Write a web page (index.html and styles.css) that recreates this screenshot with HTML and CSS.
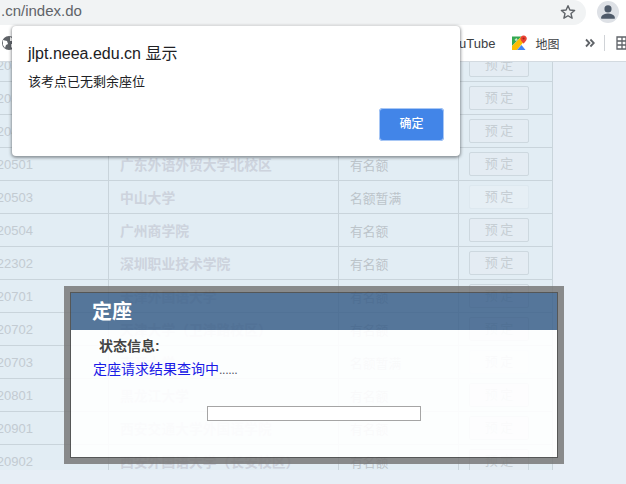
FILE: index.html
```html
<!DOCTYPE html>
<html lang="zh-CN">
<head>
<meta charset="utf-8">
<title>定座</title>
<link rel="stylesheet" href="styles.css">
</head>
<body>
<div class="addr-row">
  <div class="omnibox">
    <span class="url">.cn/index.do</span>
    <svg class="star" viewBox="0 0 24 24" width="18" height="18"><path d="M12 3.6l2.5 5.8 6.3.55-4.8 4.15 1.45 6.15L12 17l-5.45 3.25L8 14.1 3.2 9.95l6.3-.55z" fill="none" stroke="#5f6368" stroke-width="1.9" stroke-linejoin="round"/></svg>
  </div>
  <div class="avatar"><svg viewBox="0 0 24 24" width="22" height="22"><circle cx="12" cy="8.6" r="3.9" fill="#4f5a69"/><path d="M4.6 19.4v-1.6c0-2.8 4.9-4.2 7.4-4.2s7.4 1.4 7.4 4.2v1.6z" fill="#4f5a69"/></svg></div>
</div>
<div class="bookmarks">
  <svg class="globe" viewBox="0 0 16 16" width="16" height="16"><circle cx="8" cy="8" r="7" fill="#5f6368"/><path d="M2 5l4 1 1 3-2 1-1 3-2-3zM9 2l4 2-2 2-2 0zM10 9l3 0-2 4-1-1z" fill="#fff"/></svg>
  <span class="bm-spacer"></span>
  <span class="bm-text">uTube</span>
  <svg class="maps" viewBox="0 0 16 16" width="16" height="16">
    <path d="M1 1.5h9.5L1 11z" fill="#34a853"/>
    <path d="M1 11l9.5-9.5 4 3L6 15H1z" fill="#fbbc04"/>
    <path d="M6 15l4.5-5 4 5z" fill="#4285f4"/>
    <path d="M3.6 4.8l1.7-1.7 1.4 1.4-1.7 1.7z" fill="#c8e6c9"/>
    <path d="M12.6 0.4c-2 0-3.2 1.5-3.2 3.1 0 2.2 3.2 5 3.2 5s3.2-2.8 3.2-5c0-1.6-1.2-3.1-3.2-3.1z" fill="#ea4335"/>
    <circle cx="12.6" cy="3.5" r="1.1" fill="#a52714"/>
  </svg>
  <span class="bm-text bm-map">地图</span>
  <svg class="chev" viewBox="0 0 10 10" width="10" height="10"><path d="M1 1.5L4.4 5 1 8.5M5.4 1.5L8.8 5 5.4 8.5" fill="none" stroke="#5f6368" stroke-width="1.8"/></svg>
  <span class="bm-sep"></span>
  <svg class="apps" viewBox="0 0 14 14" width="14" height="14"><path d="M1 1h13v12H1zM1 5h13M1 9h13M6 1v12M10 1v12" fill="none" stroke="#5f6368" stroke-width="1.3"/></svg>
</div>
<main class="page">
  <table class="sites">
    <colgroup><col class="c1"><col class="c2"><col class="c3"><col class="c4"></colgroup>
    <tbody>
      <tr><td class="code">20301</td><td class="name"></td><td class="st"></td><td class="act"><span class="btn">预 定</span></td></tr>
      <tr><td class="code">20302</td><td class="name"></td><td class="st"></td><td class="act"><span class="btn">预 定</span></td></tr>
      <tr><td class="code">20401</td><td class="name"></td><td class="st"></td><td class="act"><span class="btn">预 定</span></td></tr>
      <tr><td class="code">20501</td><td class="name">广东外语外贸大学北校区</td><td class="st">有名额</td><td class="act"><span class="btn">预 定</span></td></tr>
      <tr><td class="code">20503</td><td class="name">中山大学</td><td class="st">名额暂满</td><td class="act"><span class="btn off">预 定</span></td></tr>
      <tr><td class="code">20504</td><td class="name">广州商学院</td><td class="st">有名额</td><td class="act"><span class="btn">预 定</span></td></tr>
      <tr><td class="code">22302</td><td class="name">深圳职业技术学院</td><td class="st">有名额</td><td class="act"><span class="btn">预 定</span></td></tr>
      <tr><td class="code">20701</td><td class="name">天津外国语大学</td><td class="st">有名额</td><td class="act"><span class="btn">预 定</span></td></tr>
      <tr><td class="code">20702</td><td class="name">天津大学（卫津路校区）</td><td class="st">有名额</td><td class="act"><span class="btn">预 定</span></td></tr>
      <tr><td class="code">20703</td><td class="name">南开大学</td><td class="st">名额暂满</td><td class="act"><span class="btn off">预 定</span></td></tr>
      <tr><td class="code">20801</td><td class="name">黑龙江大学</td><td class="st">有名额</td><td class="act"><span class="btn">预 定</span></td></tr>
      <tr><td class="code">20901</td><td class="name">西安交通大学外国语学院</td><td class="st">有名额</td><td class="act"><span class="btn">预 定</span></td></tr>
      <tr><td class="code">20902</td><td class="name">西安外国语大学（长安校区）</td><td class="st">有名额</td><td class="act"><span class="btn">预 定</span></td></tr>
    </tbody>
  </table>
</main>
<section class="alert">
  <h2 class="alert-title">jlpt.neea.edu.cn 显示</h2>
  <p class="alert-msg">该考点已无剩余座位</p>
  <div class="alert-foot"><span class="alert-ok">确定</span></div>
</section>
<section class="modal">
  <div class="modal-inner">
    <h3 class="modal-head">定座</h3>
    <div class="modal-body">
      <div class="status">状态信息:</div>
      <div class="query">定座请求结果查询中<span class="dots">......</span></div>
      <div class="progress"></div>
    </div>
  </div>
</section>
</body>
</html>
```
FILE: styles.css
```css
* { box-sizing: border-box; }
html, body { margin: 0; height: 100%; }
body {
  width: 626px;
  height: 484px;
  overflow: hidden;
  position: relative;
  background: #e7eef6;
  font-family: "Liberation Sans", "Noto Sans CJK SC", sans-serif;
}
.addr-row {
  position: relative;
  z-index: 1;
  height: 25px;
  display: flex;
  align-items: flex-start;
  background: #fff;
}
.omnibox {
  width: 586px;
  height: 25px;
  padding: 0 9px 0 1px;
  display: flex;
  align-items: center;
  justify-content: space-between;
  background: #f1f3f4;
  border-radius: 0 13px 13px 0;
}
.url {
  font-size: 15px;
  line-height: 22px;
  margin-top: -3px;
  color: #5f6368;
}
.star { display: block; margin-top: -2px; }
.avatar {
  width: 22px;
  height: 22px;
  margin: 1px 0 0 11px;
  border-radius: 50%;
  background: #dee1e6;
}
.avatar svg { display: block; }
.bookmarks {
  position: relative;
  z-index: 1;
  height: 37px;
  display: flex;
  align-items: center;
  background: #fff;
  border-bottom: 1px solid #d3dae0;
}
.globe { flex: none; margin-left: 1px; }
.bm-spacer { flex: 0 0 442px; }
.bm-text {
  font-size: 13px;
  white-space: nowrap;
  color: #3c4043;
}
.maps { flex: none; margin-left: 16px; }
.bm-map { margin-left: 8px; font-size: 12px; }
.chev { flex: none; margin-left: 26px; }
.bm-sep {
  flex: none;
  width: 1px;
  height: 16px;
  margin-left: 9px;
  background: #d0d3d7;
}
.apps { flex: none; margin-left: 11px; }
.page {
  height: 422px;
  overflow: hidden;
  margin-top: -14px;
}
.sites {
  width: 600px;
  margin-left: -49px;
  border-collapse: collapse;
  table-layout: fixed;
  background: #e2edf4;
  font-size: 13px;
  color: #c3cbd2;
}
.c1 { width: 157px; }
.c2 { width: 230px; }
.c3 { width: 120px; }
.c4 { width: 94px; }
.sites td {
  height: 33px;
  padding: 0;
  border: 1px solid #c9d4db;
  vertical-align: middle;
}
.sites .code { text-align: right; padding-right: 75px; }
.sites .name { padding-left: 11px; font-weight: 700; font-size: 13.8px; color: #cdd3dd; }
.sites .st { padding-left: 11px; font-size: 12.8px; color: #bcc4ca; }
.sites .act { padding-left: 10px; }
.btn {
  display: block;
  width: 60px;
  height: 24px;
  line-height: 22px;
  border: 1px solid #cdd8df;
  border-radius: 2px;
  text-align: center;
  font-size: 13px;
  word-spacing: -1px;
  color: #c6ced4;
  background: #e4ecf3;
}
.btn.off { border-color: #dde8ef; background: #e6eff5; }
.alert {
  position: absolute;
  z-index: 2;
  left: 12px;
  top: 26px;
  width: 448px;
  height: 130px;
  padding: 17px 16px 0;
  background: #fff;
  border-radius: 4px;
  box-shadow: 0 1px 3px 1px rgba(60, 64, 67, .5);
}
.alert-title {
  margin: 0;
  font-size: 16px;
  font-weight: 400;
  line-height: 21px;
  color: #202124;
}
.alert-msg {
  margin: 9px 0 0;
  font-size: 13px;
  line-height: 18px;
  color: #202124;
}
.alert-foot {
  display: flex;
  justify-content: flex-end;
  margin-top: 17px;
}
.alert-ok {
  width: 65px;
  height: 33px;
  line-height: 33px;
  text-align: center;
  font-size: 12px;
  font-weight: 500;
  color: #fff;
  background: #4285e8;
  border-radius: 4px;
  box-shadow: 0 0 0 1px #a8c7f5 inset;
}
.modal {
  position: absolute;
  z-index: 1;
  left: 64px;
  top: 286px;
  width: 500px;
  height: 178px;
  border: 6px solid rgba(120, 120, 120, .85);
}
.modal-inner {
  height: 100%;
  border: 1px solid rgba(70, 70, 70, .9);
  display: flex;
  flex-direction: column;
}
.modal-head {
  height: 37px;
  margin: 0;
  padding-left: 21px;
  font-size: 20px;
  line-height: 38px;
  font-weight: 700;
  color: #fff;
  background: rgba(60, 96, 137, .85);
}
.modal-body {
  flex: 1;
  padding: 6px 22px 0;
  background: rgba(255, 255, 255, .9);
}
.status {
  padding-left: 6px;
  font-size: 14px;
  font-weight: 700;
  line-height: 20px;
  color: #444;
}
.query {
  font-size: 14px;
  line-height: 20px;
  color: #1a1ae6;
  margin-top: 3px;
}
.dots { color: #556; font-size: 12.5px; letter-spacing: -.4px; }
.progress {
  width: 214px;
  height: 15px;
  margin: 26px 0 0 114px;
  border: 1px solid #a5a5a5;
  background: #fff;
}
```
